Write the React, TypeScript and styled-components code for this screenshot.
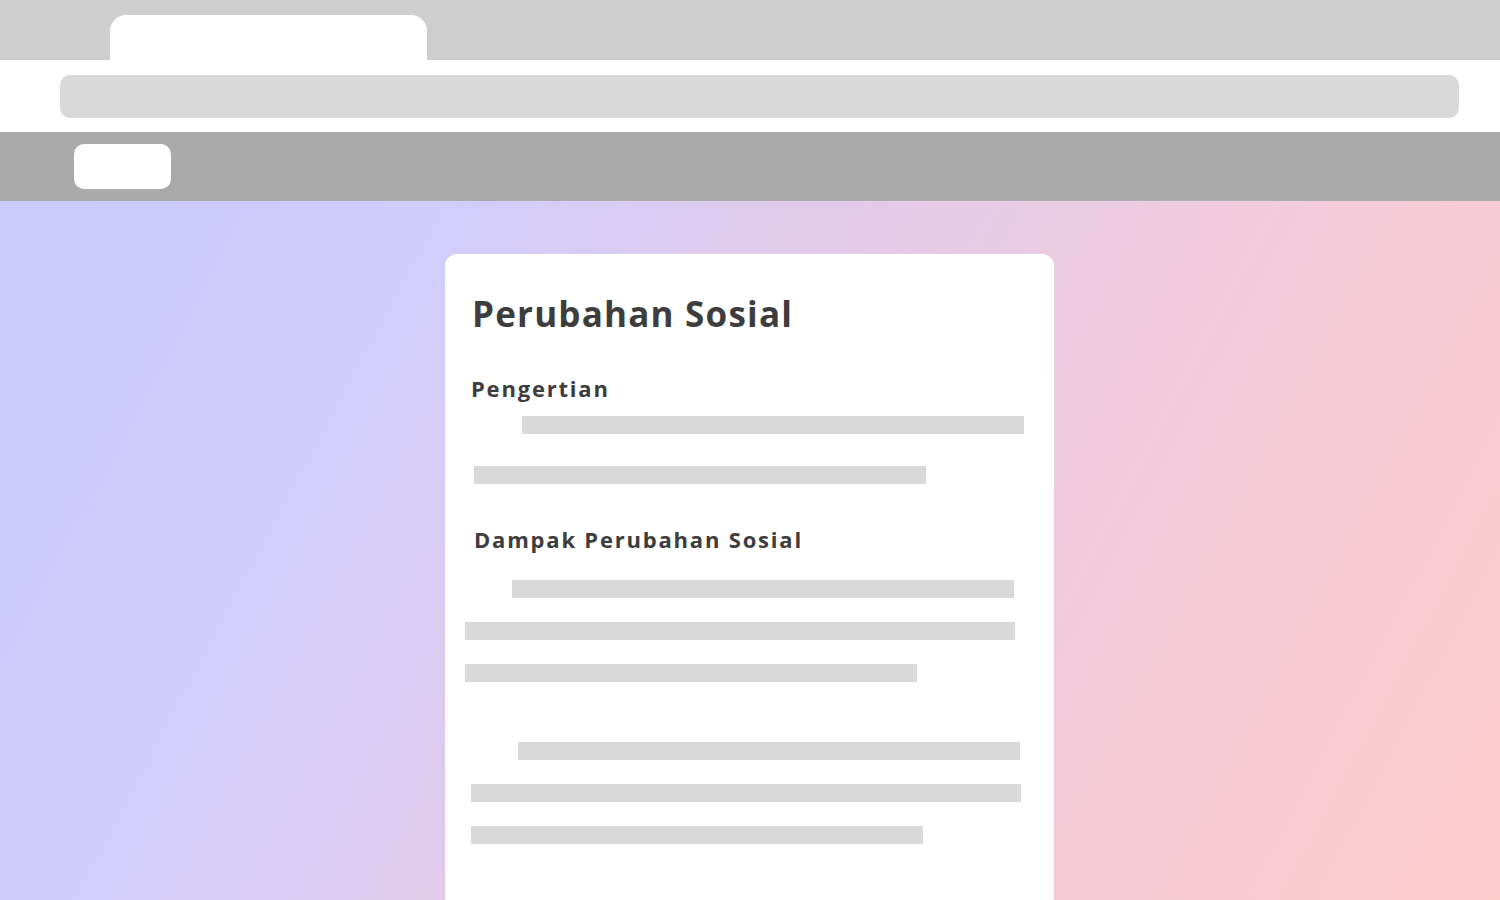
import React from 'react';
import styled, { createGlobalStyle } from 'styled-components';

const GlobalStyle = createGlobalStyle`
  html, body {
    margin: 0;
    padding: 0;
    height: 100%;
    overflow: hidden;
  }
  body {
    font-family: "Open Sans", "Liberation Sans", sans-serif;
    background: #ffffff;
  }
`;

type LineSpec = { indent: number; width: number; top: number };

const pengertianLines: LineSpec[] = [
  { indent: 77, width: 502, top: 14 },
  { indent: 29, width: 452, top: 32 },
];

const dampakLines: LineSpec[] = [
  { indent: 67, width: 502, top: 27 },
  { indent: 20, width: 550, top: 24 },
  { indent: 20, width: 452, top: 24 },
  { indent: 73, width: 502, top: 60 },
  { indent: 26, width: 550, top: 24 },
  { indent: 26, width: 452, top: 24 },
];

function App() {
  return (
    <Page>
      <GlobalStyle />
      <TabBar>
        <Tab />
      </TabBar>
      <AddressRow>
        <AddressField />
      </AddressRow>
      <Toolbar>
        <ToolButton />
      </Toolbar>
      <Content>
        <Card>
          <Title>Perubahan Sosial</Title>
          <Heading $indent={-3} $top={39}>Pengertian</Heading>
          {pengertianLines.map((l, i) => (
            <Line key={i} $indent={l.indent} $width={l.width} $top={l.top} />
          ))}
          <Heading $indent={0} $top={41}>Dampak Perubahan Sosial</Heading>
          {dampakLines.map((l, i) => (
            <Line key={i} $indent={l.indent} $width={l.width} $top={l.top} />
          ))}
        </Card>
      </Content>
    </Page>
  );
}

const Page = styled.div`
  display: flex;
  flex-direction: column;
  width: 1500px;
  height: 900px;
  overflow: hidden;
`;

const TabBar = styled.div`
  height: 60px;
  background: #cecece;
  display: flex;
  align-items: flex-end;
  padding-left: 110px;
  box-sizing: border-box;
`;

const Tab = styled.div`
  width: 317px;
  height: 45px;
  background: #ffffff;
  border-radius: 16px 16px 0 0;
`;

const AddressRow = styled.div`
  height: 72px;
  background: #ffffff;
  display: flex;
  align-items: flex-start;
  padding: 15px 41px 0 60px;
  box-sizing: border-box;
`;

const AddressField = styled.div`
  flex: 1;
  height: 43px;
  background: #d9d9d9;
  border-radius: 10px;
`;

const Toolbar = styled.div`
  height: 69px;
  background: #aaaaaa;
  display: flex;
  align-items: flex-start;
  padding: 12px 74px 0;
  box-sizing: border-box;
`;

const ToolButton = styled.div`
  width: 97px;
  height: 45px;
  background: #ffffff;
  border-radius: 10px;
`;

const Content = styled.main`
  flex: 1;
  display: flex;
  justify-content: center;
  align-items: flex-start;
  padding: 53px 1px 0 0;
  overflow: hidden;
  background: linear-gradient(118deg, #cbcbfe 0%, #d2cdfb 25%, #e6cbe6 50%, #f6cbd8 75%, #fdcccd 100%);
`;

const Card = styled.section`
  width: 609px;
  min-height: 720px;
  background: #ffffff;
  border-radius: 12px 12px 0 0;
  padding: 39px 0 0 26px;
  box-sizing: border-box;
  display: flex;
  flex-direction: column;
  align-items: flex-start;
  color: #3d3d3d;
`;

const Title = styled.h1`
  margin: 0 0 0 1px;
  font-size: 35px;
  line-height: 42px;
  font-weight: 700;
  letter-spacing: 1.2px;
`;

const Heading = styled.h2<{ $indent: number; $top: number }>`
  margin: ${(p) => p.$top}px 0 0 ${(p) => p.$indent + 3}px;
  font-size: 22px;
  line-height: 28px;
  font-weight: 700;
  letter-spacing: 1.8px;
`;

const Line = styled.div<{ $indent: number; $width: number; $top: number }>`
  margin: ${(p) => p.$top}px 0 0 ${(p) => p.$indent - 26}px;
  width: ${(p) => p.$width}px;
  height: 18px;
  background: #d9d9d9;
  flex-shrink: 0;
`;

export default App;
